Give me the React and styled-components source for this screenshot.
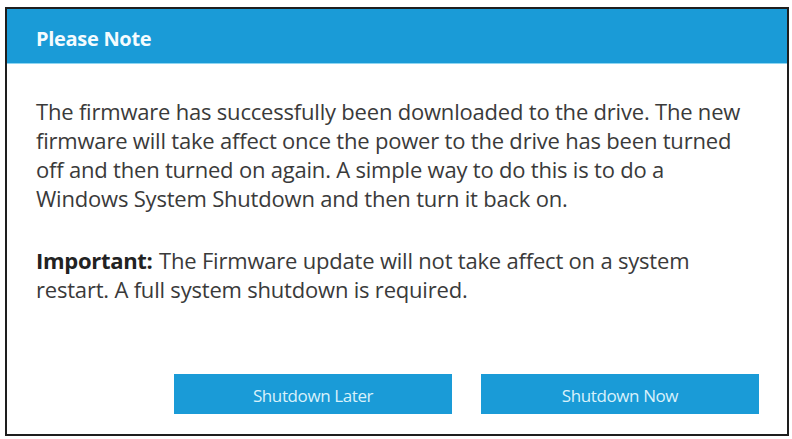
import React from "react";
import styled, { createGlobalStyle } from "styled-components";

const Global = createGlobalStyle`
  html, body { margin: 0; padding: 0; background: #ffffff; }
  body { font-family: "Open Sans", "Noto Sans", sans-serif; }
`;

const Page = styled.div`
  width: 792px;
  height: 439px;
  padding: 7px 0 0 5px;
  box-sizing: border-box;
`;

const Dialog = styled.div`
  width: 784px;
  height: 429px;
  box-sizing: border-box;
  border: 2px solid #1e1e1e;
  background: #fff;
  display: flex;
  flex-direction: column;
`;

const Header = styled.div`
  height: 55px;
  box-sizing: border-box;
  padding: 4px 0 0 29px;
  background: #1a9bd7;
  display: flex;
  align-items: center;
  color: #f4fbfe;
  font-weight: 700;
  font-size: 20px;
  letter-spacing: -0.3px;
  border-bottom: 1px solid #8fd6f2;
`;

const Body = styled.div`
  flex: 1;
  padding: 33px 35px 0 29px;
  color: #3a3a3a;
  font-size: 22px;
  line-height: 29px;
  letter-spacing: -0.2px;
`;

const Para = styled.p`
  margin: 0 0 ${(p) => p.$gap || 0}px 0;
`;

const Strong = styled.b`
  color: #222;
  font-weight: 700;
  letter-spacing: -0.3px;
  margin-right: 1px;
`;

const Buttons = styled.div`
  display: flex;
  justify-content: flex-end;
  gap: 29px;
  padding: 0 28px 20px 0;
`;

const Button = styled.button`
  width: 278px;
  height: 40px;
  border: none;
  background: #1a9bd7;
  color: #d8f1fb;
  font-family: "Open Sans", "Noto Sans", sans-serif;
  font-size: 17px;
  letter-spacing: -0.4px;
  padding: 2px 0 0;
  cursor: pointer;
`;

export default function App() {
  return (
    <>
      <Global />
      <Page>
        <Dialog>
          <Header>Please Note</Header>
          <Body>
            <Para $gap={33}>
              The firmware has successfully been downloaded to the drive. The new
              firmware will take affect once the power to the drive has been turned
              off and then turned on again. A simple way to do this is to do a
              Windows System Shutdown and then turn it back on.
            </Para>
            <Para>
              <Strong>Important:</Strong> The Firmware update will not take affect on a system
              restart. A full system shutdown is required.
            </Para>
          </Body>
          <Buttons>
            <Button>Shutdown Later</Button>
            <Button>Shutdown Now</Button>
          </Buttons>
        </Dialog>
      </Page>
    </>
  );
}
